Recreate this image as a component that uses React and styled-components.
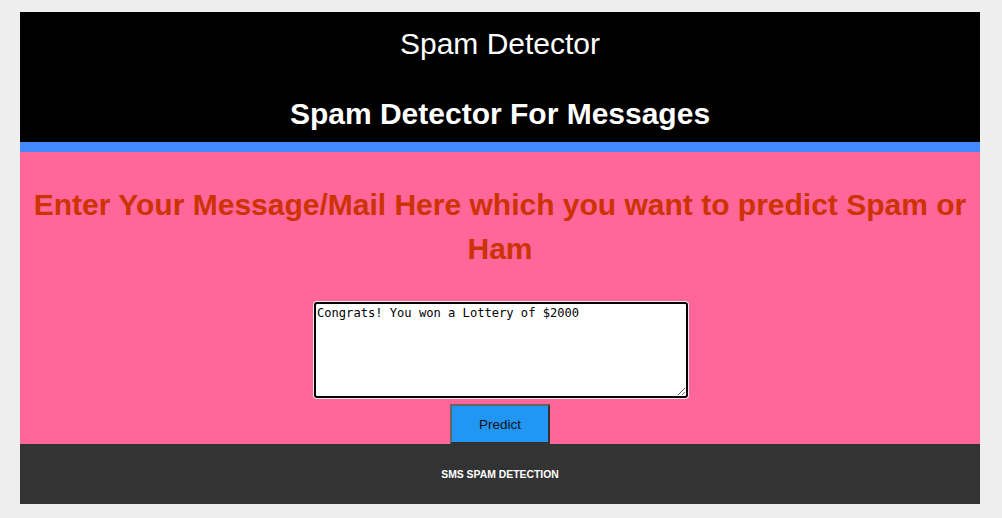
import React, { useState } from "react";
import styled, { createGlobalStyle } from "styled-components";

function App() {
  const [message, setMessage] = useState("Congrats! You won a Lottery of $2000");

  return (
    <>
      <GlobalStyle />
      <Page>
        <Header>
          <SiteTitle>Spam Detector</SiteTitle>
          <SubTitle>Spam Detector For Messages</SubTitle>
        </Header>
        <Stripe />
        <Main>
          <Prompt>
            Enter Your Message/Mail Here which you want to predict Spam or Ham
          </Prompt>
          <Form onSubmit={(e) => e.preventDefault()}>
            <MessageBox
              value={message}
              onChange={(e) => setMessage(e.target.value)}
            />
            <PredictButton type="submit">Predict</PredictButton>
          </Form>
        </Main>
        <Footer>
          <FooterText>SMS SPAM DETECTION</FooterText>
        </Footer>
      </Page>
    </>
  );
}

export default App;

const GlobalStyle = createGlobalStyle`
  html, body {
    margin: 0;
    padding: 0;
    background-color: #eeeeee;
  }
  body {
    font-family: "Liberation Sans", Arial, sans-serif;
  }
`;
const Page = styled.div`
  width: 960px;
  margin: 12px 0 0 20px;
  display: flex;
  flex-direction: column;
`;
const Header = styled.header`
  background-color: #000000;
  color: #ffffff;
  text-align: center;
  padding: 16px 0 11px;
  display: flex;
  flex-direction: column;
  gap: 37px;
`;
const SiteTitle = styled.h1`
  margin: 0;
  font-size: 30px;
  line-height: 32px;
  font-weight: 400;
`;
const SubTitle = styled.h2`
  margin: 0;
  font-size: 30px;
  line-height: 34px;
  font-weight: 700;
`;
const Stripe = styled.div`
  height: 10px;
  background-color: #448aff;
`;
const Main = styled.main`
  background-color: #ff6699;
  padding-top: 31px;
  display: flex;
  flex-direction: column;
  align-items: center;
  gap: 31px;
`;
const Prompt = styled.h2`
  margin: 0;
  color: #cc3300;
  font-size: 30px;
  line-height: 44px;
  font-weight: 700;
  text-align: center;
`;
const Form = styled.form`
  display: flex;
  flex-direction: column;
  align-items: center;
  gap: 6px;
`;
const MessageBox = styled.textarea`
  box-sizing: border-box;
  width: 374px;
  height: 96px;
  margin-left: 2px;
  padding: 2px 1px;
  border: 2px solid #000000;
  border-radius: 3px;
  box-shadow: 0 0 0 1px rgba(255, 255, 255, 0.85);
  background-color: #ffffff;
  font-family: "DejaVu Sans Mono", "Liberation Mono", monospace;
  font-size: 12.1px;
  line-height: 15px;
  color: #000000;
  outline: none;
`;
const PredictButton = styled.button`
  box-sizing: border-box;
  width: 100px;
  height: 40px;
  background-color: #2196f3;
  color: #111111;
  border: 2px solid;
  border-color: #666666 #333333 #333333 #666666;
  font-family: "Liberation Sans", Arial, sans-serif;
  font-size: 13.5px;
  cursor: pointer;
`;
const Footer = styled.footer`
  height: 60px;
  background-color: #333333;
  display: flex;
  align-items: center;
  justify-content: center;
`;
const FooterText = styled.p`
  margin: 0;
  color: #ffffff;
  font-size: 10.4px;
  font-weight: 700;
`;
